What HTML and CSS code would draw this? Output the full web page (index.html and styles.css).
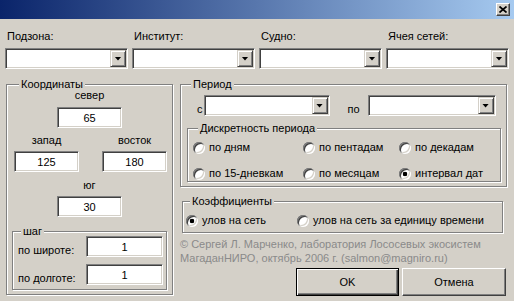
FILE: index.html
```html
<!DOCTYPE html>
<html lang="ru">

<head>
    <meta charset="UTF-8">
    <title>Параметры выборки</title>
    <link rel="stylesheet" href="styles.css">
</head>

<body>

    <!-- заголовок окна -->
    <div class="titlebar">
        <button class="close-btn" title="Закрыть">
            <svg width="8" height="7" viewBox="0 0 8 7">
                <path d="M0.5 0.5L7.5 6.5M7.5 0.5L0.5 6.5" stroke="#000" stroke-width="1.7" fill="none"/>
            </svg>
        </button>
    </div>

    <!-- верхние фильтры -->
    <div class="filters">
        <div class="field">
            <label>Подзона:</label>
            <div class="combo"><span class="combo-btn"></span></div>
        </div>
        <div class="field">
            <label>Институт:</label>
            <div class="combo"><span class="combo-btn"></span></div>
        </div>
        <div class="field">
            <label>Судно:</label>
            <div class="combo"><span class="combo-btn"></span></div>
        </div>
        <div class="field">
            <label>Ячея сетей:</label>
            <div class="combo"><span class="combo-btn"></span></div>
        </div>
    </div>

    <div class="main">
        <!-- координаты -->
        <fieldset class="group coords">
            <legend>Координаты</legend>
            <div class="coords-body">
                <div class="cap north">север</div>
                <input class="edit edit-north" type="text" value="65">
                <div class="pair">
                    <div class="pair-col">
                        <div class="cap">запад</div>
                        <input class="edit" type="text" value="125">
                    </div>
                    <div class="pair-col">
                        <div class="cap">восток</div>
                        <input class="edit" type="text" value="180">
                    </div>
                </div>
                <div class="cap south">юг</div>
                <input class="edit edit-south" type="text" value="30">

                <fieldset class="group step">
                    <legend>шаг</legend>
                    <div class="step-row">
                        <span>по широте:</span>
                        <input class="edit edit-step" type="text" value="1">
                    </div>
                    <div class="step-row">
                        <span>по долготе:</span>
                        <input class="edit edit-step" type="text" value="1">
                    </div>
                </fieldset>
            </div>
        </fieldset>

        <div class="side">
            <!-- период -->
            <fieldset class="group period">
                <legend>Период</legend>
                <div class="range">
                    <span>с</span>
                    <div class="combo combo-from"><span class="combo-btn"></span></div>
                    <span class="range-to">по</span>
                    <div class="combo combo-to"><span class="combo-btn"></span></div>
                </div>

                <fieldset class="group discrete">
                    <legend>Дискретность периода</legend>
                    <div class="radio-grid">
                        <label class="opt"><input class="radio" type="radio" name="step">по дням</label>
                        <label class="opt"><input class="radio" type="radio" name="step">по пентадам</label>
                        <label class="opt"><input class="radio" type="radio" name="step">по декадам</label>
                        <label class="opt"><input class="radio" type="radio" name="step">по 15-дневкам</label>
                        <label class="opt"><input class="radio" type="radio" name="step">по месяцам</label>
                        <label class="opt"><input class="radio" type="radio" name="step" checked>интервал дат</label>
                    </div>
                </fieldset>
            </fieldset>

            <!-- коэффициенты -->
            <fieldset class="group coef">
                <legend>Коэффициенты</legend>
                <div class="coef-row">
                    <label class="opt"><input class="radio" type="radio" name="coef" checked>улов на сеть</label>
                    <label class="opt"><input class="radio" type="radio" name="coef">улов на сеть за единицу времени</label>
                </div>
            </fieldset>

            <p class="copyright">© Сергей Л. Марченко, лаборатория Лососевых экосистем<br>МагаданНИРО, октябрь 2006 г. (salmon@magniro.ru)</p>

            <div class="actions">
                <button class="btn btn-default">OK</button>
                <button class="btn">Отмена</button>
            </div>
        </div>
    </div>

</body>

</html>
```

FILE: styles.css
```css
/* общие стили */
body,
html {
    margin: 0;
    padding: 0;
}

body {
    width: 514px;
    height: 301px;
    overflow: hidden;
    background-color: #d4d0c8;
    font-family: "Liberation Sans", Arial, sans-serif;
    font-size: 11px;
    line-height: 13px;
    color: #000;
}

/* заголовок окна */
.titlebar {
    height: 19px;
    background: linear-gradient(to right, #0a246a, #a6caf0);
    display: flex;
    justify-content: flex-end;
    align-items: center;
    padding-right: 4px;
}

.close-btn {
    width: 14px;
    height: 13px;
    padding: 0;
    margin: 0;
    background-color: #d4d0c8;
    border: 1px solid;
    border-color: #fff #404040 #404040 #fff;
    box-shadow: inset -1px -1px 0 #808080;
    display: flex;
    justify-content: center;
    align-items: center;
}

/* выпадающие списки */
.filters {
    display: grid;
    grid-template-columns: repeat(4, 1fr);
    column-gap: 4px;
    padding: 11px 5px 0 5px;
}

.field label {
    display: block;
    padding-left: 2px;
    margin-bottom: 5px;
}

.combo {
    height: 21px;
    box-sizing: border-box;
    background-color: #fff;
    border: 1px solid;
    border-color: #808080 #fff #fff #808080;
    box-shadow: inset 1px 1px 0 #404040, inset -1px -1px 0 #d4d0c8;
    padding: 1px;
    display: flex;
    justify-content: flex-end;
}

.combo-btn {
    width: 16px;
    height: 17px;
    box-sizing: border-box;
    background-color: #d4d0c8;
    border: 1px solid;
    border-color: #d4d0c8 #404040 #404040 #d4d0c8;
    box-shadow: inset 1px 1px 0 #fff, inset -1px -1px 0 #808080;
    display: flex;
    justify-content: center;
    align-items: center;
}

.combo-btn::after {
    content: "";
    width: 7px;
    height: 4px;
    background-color: #000;
    clip-path: polygon(0 0, 100% 0, 50% 100%);
}

/* рамки групп */
.group {
    margin: 0;
    padding: 0 5px;
    min-width: 0;
    box-sizing: border-box;
    border: 1px solid #808080;
    box-shadow: 1px 1px 0 #fff, inset 1px 1px 0 #fff;
}

.group legend {
    line-height: 8px;
    padding: 0 2px;
    background-color: #d4d0c8;
}

.main {
    display: flex;
    gap: 7px;
    padding-left: 6px;
    margin-top: 11px;
}

/* координаты */
.coords {
    width: 167px;
    height: 215px;
}

.coords legend {
    margin-left: 7px;
}

.coords-body {
    display: flex;
    flex-direction: column;
    align-items: center;
}

.cap {
    text-align: center;
}

.north {
    margin-top: 1px;
}

.edit {
    width: 65px;
    height: 21px;
    box-sizing: border-box;
    margin: 0;
    padding: 0;
    font: inherit;
    text-align: center;
    background-color: #fff;
    border: 1px solid;
    border-color: #808080 #fff #fff #808080;
    box-shadow: inset 1px 1px 0 #404040, inset -1px -1px 0 #d4d0c8;
    outline: none;
}

.edit-north {
    margin-top: 5px;
}

.pair {
    align-self: stretch;
    display: grid;
    grid-template-columns: 65px 65px;
    column-gap: 23px;
    margin: 6px 0 0 2px;
}

.pair-col {
    display: flex;
    flex-direction: column;
    align-items: center;
}

.pair-col .edit {
    margin-top: 4px;
}

.south {
    margin-top: 7px;
}

.edit-south {
    margin-top: 4px;
}

/* шаг */
.step {
    align-self: stretch;
    margin-top: 10px;
    padding: 0 2px 4px 5px;
}

.step legend {
    margin-left: 3px;
}

.step-row {
    display: flex;
    align-items: flex-end;
    justify-content: space-between;
}

.step-row + .step-row {
    margin-top: 7px;
}

.step-row:first-of-type {
    margin-top: 1px;
}

.edit-step {
    width: 77px;
    margin-right: 1px;
}

/* правая колонка */
.side {
    width: 327px;
    display: flex;
    flex-direction: column;
}

.period {
    padding: 0 5px 4px 6px;
}

.period > legend {
    margin-left: 4px;
}

.range {
    display: flex;
    align-items: flex-end;
    margin: 7px 0 0 10px;
}

.combo-from {
    width: 126px;
    margin-left: 1px;
}

.range-to {
    margin: 0 8px 0 18px;
}

.combo-to {
    width: 128px;
}

.discrete {
    margin-top: 8px;
    padding: 0 5px 1px 5px;
}

.discrete legend {
    margin-left: 5px;
}

.radio-grid {
    display: grid;
    grid-template-columns: 110px 96px auto;
    grid-auto-rows: 13px;
    row-gap: 13px;
    margin-top: 9px;
}

.opt {
    display: flex;
    align-items: center;
    gap: 4px;
    white-space: nowrap;
}

/* переключатели */
.radio {
    appearance: none;
    -webkit-appearance: none;
    margin: 0;
    width: 12px;
    height: 12px;
    flex: none;
    border-radius: 50%;
    background-color: #fff;
    box-shadow: inset 1px 1px 0 #808080, inset -1px -1px 0 #fff,
        inset 2px 2px 0 #404040, inset -2px -2px 0 #d4d0c8;
}

.radio:checked {
    background: radial-gradient(circle, #000 0, #000 2px, #fff 2.6px);
}

/* коэффициенты */
.coef {
    margin: 10px 4px 0 2px;
    padding: 0 5px 5px 3px;
}

.coef legend {
    margin-left: 4px;
}

.coef-row {
    display: grid;
    grid-template-columns: 111px auto;
    grid-auto-rows: 13px;
    margin-top: 9px;
}

.copyright {
    margin: 4px 0 0 0;
    line-height: 14px;
    color: #8a8a8a;
    white-space: nowrap;
}

/* кнопки */
.actions {
    display: flex;
    justify-content: flex-end;
    gap: 3px;
    padding-right: 1px;
    margin-top: 3px;
}

.btn {
    width: 104px;
    height: 28px;
    margin: 0;
    padding: 0;
    font: inherit;
    color: #000;
    background-color: #d4d0c8;
    border: 1px solid;
    border-color: #fff #404040 #404040 #fff;
    box-shadow: inset -1px -1px 0 #808080;
}

.btn-default {
    width: 103px;
    border-color: #000;
    box-shadow: inset 1px 1px 0 #fff, inset -1px -1px 0 #404040, inset -2px -2px 0 #808080;
}
```
